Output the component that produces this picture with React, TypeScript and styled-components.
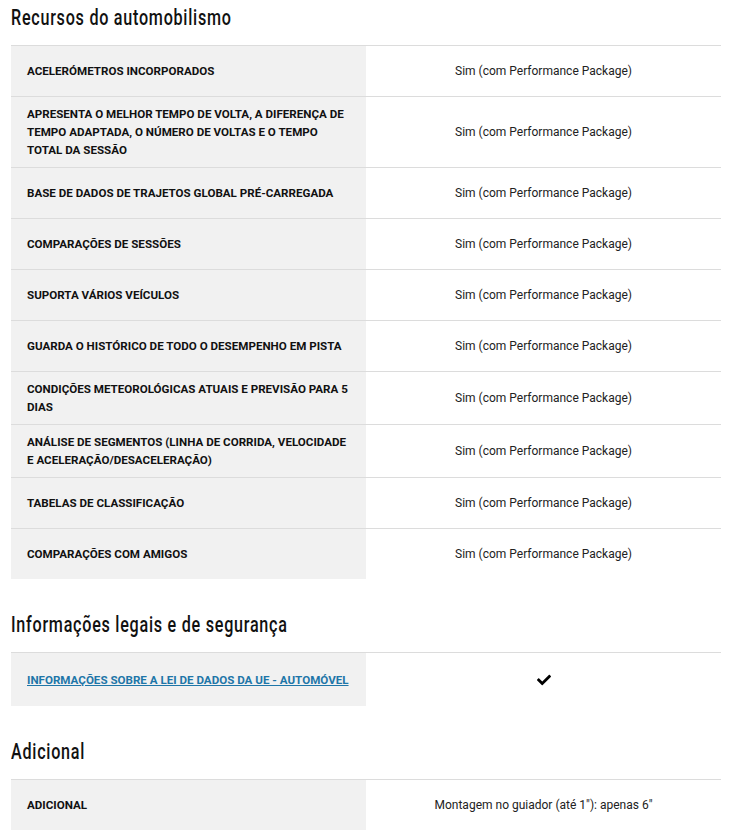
import React from "react";
import styled, { createGlobalStyle } from "styled-components";
import { FaCheck } from "react-icons/fa";

const GlobalStyle = createGlobalStyle`
  body {
    margin: 0;
    background: #fff;
    font-family: Roboto, "Liberation Sans", sans-serif;
    color: #111;
  }
`;

const Page = styled.div`
  padding: 0 8px 8px 11px;
`;

const Section = styled.section`
  margin-bottom: 28px;
`;

const Title = styled.h2`
  margin: 0;
  height: 45px;
  display: flex;
  align-items: center;
  padding-bottom: 10px;
  box-sizing: border-box;
  font-weight: 500;
  font-size: 21.5px;
  color: #111;
`;

const TitleText = styled.span`
  display: inline-block;
  font-family: Roboto, sans-serif;
  letter-spacing: 1px;
  transform: scaleX(0.75);
  transform-origin: left center;
  white-space: nowrap;
`;

const Table = styled.div`
  border-top: 1px solid #dcdcdc;
`;

const Row = styled.div`
  display: grid;
  grid-template-columns: 355px 1fr;
  border-bottom: 1px solid #dcdcdc;
  &:last-child {
    border-bottom: none;
  }
`;

const Label = styled.div<{ $tall?: boolean }>`
  background: #f1f1f1;
  min-height: ${(p) => (p.$tall ? 53 : 50)}px;
  padding: 8px 14px 8px 16px;
  box-sizing: border-box;
  display: flex;
  align-items: center;
  font-size: 11.6px;
  font-weight: 700;
  line-height: 18px;
  text-transform: uppercase;
  color: #111;
`;

const Value = styled.div`
  display: flex;
  align-items: center;
  justify-content: center;
  text-align: center;
  font-size: 12px;
  color: #222;
  padding: 0 16px;
`;

const Link = styled.a`
  color: #1e76a8;
  text-decoration: underline;
  cursor: pointer;
`;

const racing = [
  "Acelerómetros incorporados",
  "Apresenta o melhor tempo de volta, a diferença de tempo adaptada, o número de voltas e o tempo total da sessão",
  "Base de dados de trajetos global pré-carregada",
  "Comparações de sessões",
  "Suporta vários veículos",
  "Guarda o histórico de todo o desempenho em pista",
  "Condições meteorológicas atuais e previsão para 5 dias",
  "Análise de segmentos (linha de corrida, velocidade e aceleração/desaceleração)",
  "Tabelas de classificação",
  "Comparações com amigos",
];

export default function App() {
  return (
    <Page>
      <GlobalStyle />
      <Section>
        <Title>
          <TitleText>Recursos do automobilismo</TitleText>
        </Title>
        <Table>
          {racing.map((r) => (
            <Row key={r}>
              <Label>{r}</Label>
              <Value>Sim (com Performance Package)</Value>
            </Row>
          ))}
        </Table>
      </Section>
      <Section>
        <Title>
          <TitleText>Informações legais e de segurança</TitleText>
        </Title>
        <Table>
          <Row>
            <Label $tall>
              <Link>Informações sobre a Lei de Dados da UE - Automóvel</Link>
            </Label>
            <Value>
              <FaCheck size={14} color="#000" />
            </Value>
          </Row>
        </Table>
      </Section>
      <Section>
        <Title>
          <TitleText>Adicional</TitleText>
        </Title>
        <Table>
          <Row>
            <Label>Adicional</Label>
            <Value>Montagem no guiador (até 1"): apenas 6"</Value>
          </Row>
        </Table>
      </Section>
    </Page>
  );
}
